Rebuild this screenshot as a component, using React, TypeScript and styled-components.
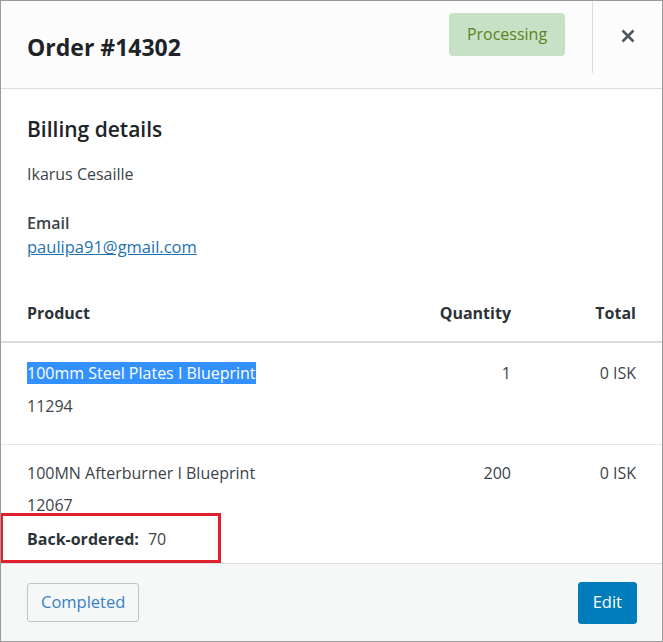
import React from "react";
import styled, { createGlobalStyle } from "styled-components";

const Global = createGlobalStyle`
  html, body { margin: 0; padding: 0; background: #ffffff; }
  body { font-family: "Open Sans", "Noto Sans", sans-serif; color: #3c434a; }
  * { box-sizing: border-box; }
`;

const Modal = styled.div`
  width: 663px;
  height: 642px;
  border: 1px solid #9a9a9a;
  display: flex;
  flex-direction: column;
  background: #fff;
  overflow: hidden;
`;

const Header = styled.header`
  height: 88px;
  flex: none;
  display: flex;
  align-items: flex-start;
  background: #fcfcfc;
  border-bottom: 1px solid #dcdcde;
  padding-left: 26px;
`;

const Title = styled.h1`
  margin: 0;
  margin-top: 32px;
  flex: 1;
  font-size: 23px;
  line-height: 28px;
  font-weight: 700;
  color: #1d2327;
`;

const Badge = styled.span`
  margin-top: 12px;
  margin-right: 27px;
  width: 116px;
  height: 43px;
  display: flex;
  align-items: center;
  justify-content: center;
  padding-bottom: 2px;
  border-radius: 4px;
  background: #c6e1c6;
  color: #5b841b;
  font-size: 16px;
`;

const CloseBtn = styled.button`
  width: 70px;
  height: 72px;
  border: none;
  border-left: 1px solid #dcdcde;
  background: transparent;
  display: flex;
  align-items: center;
  justify-content: center;
  padding: 0 0 2px 0;
  color: #50575e;
  cursor: pointer;
`;

const Body = styled.main`
  flex: 1;
  min-height: 0;
  overflow: hidden;
`;

const Section = styled.section`
  padding: 27px 26px 0;
`;

const SectionTitle = styled.h2`
  margin: 0;
  font-size: 21px;
  line-height: 26px;
  font-weight: 600;
  color: #1d2327;
`;

const Text = styled.p<{ $gap?: number }>`
  margin: ${(p) => p.$gap ?? 0}px 0 0;
  font-size: 16px;
  line-height: 22px;
  color: #3c434a;
`;

const Label = styled.div`
  margin-top: 26px;
  font-size: 16px;
  line-height: 24px;
  font-weight: 600;
  color: #3c434a;
`;

const Link = styled.a`
  display: block;
  font-size: 16.5px;
  line-height: 24px;
  color: #2271b1;
  text-decoration: underline;
`;

const TableHead = styled.div`
  margin-top: 43px;
  display: grid;
  grid-template-columns: 1fr 100px 125px;
  padding: 0 26px 17px;
  border-bottom: 2px solid #dcdcde;
`;

const Th = styled.div<{ $right?: boolean }>`
  font-size: 16px;
  line-height: 22px;
  font-weight: 700;
  color: #2c3338;
  text-align: ${(p) => (p.$right ? "right" : "left")};
`;

const Row = styled.div<{ $last?: boolean }>`
  display: grid;
  grid-template-columns: 1fr 100px 125px;
  padding: ${(p) => (p.$last ? "17px 26px 13px" : "19px 26px 27px")};
  border-bottom: ${(p) => (p.$last ? "none" : "1px solid #e8e8e8")};
`;

const Td = styled.div<{ $right?: boolean }>`
  font-size: 16px;
  line-height: 22px;
  color: #3c434a;
  text-align: ${(p) => (p.$right ? "right" : "left")};
`;

const Selected = styled.span`
  background: #3391ff;
  color: #ffffff;
`;

const Sku = styled.div<{ $gap: number }>`
  margin-top: ${(p) => p.$gap}px;
  font-size: 16px;
  line-height: 22px;
  color: #3c434a;
`;

const Meta = styled.div`
  position: relative;
  margin-top: 12px;
  font-size: 16px;
  line-height: 22px;
  color: #3c434a;
  display: flex;
  gap: 9px;
`;

const MetaKey = styled.strong`
  font-weight: 700;
  color: #2c3338;
`;

const Highlight = styled.span`
  position: absolute;
  left: -27px;
  top: -15px;
  width: 221px;
  height: 50px;
  border: 3px solid #e0202e;
  pointer-events: none;
`;

const Footer = styled.footer`
  height: 78px;
  flex: none;
  display: flex;
  align-items: center;
  justify-content: space-between;
  padding: 0 25px 0 26px;
  background: #f6f7f7;
  border-top: 1px solid #dcdcde;
`;

const SecondaryBtn = styled.button`
  height: 39px;
  padding: 0 13px 2px;
  border: 1px solid #c3c4c7;
  border-radius: 3px;
  background: #f6f7f7;
  color: #3582c4;
  font-family: inherit;
  font-size: 16.5px;
`;

const PrimaryBtn = styled.button`
  height: 42px;
  padding: 0 14px 2px;
  border: 1px solid #007cba;
  border-radius: 3px;
  background: #007cba;
  color: #ffffff;
  font-family: inherit;
  font-size: 16.5px;
`;

const items = [
  { name: "100mm Steel Plates I Blueprint", sku: "11294", qty: "1", total: "0 ISK", selected: true },
  { name: "100MN Afterburner I Blueprint", sku: "12067", qty: "200", total: "0 ISK", back: "70" },
];

export default function App() {
  return (
    <>
      <Global />
      <Modal>
        <Header>
          <Title>Order #14302</Title>
          <Badge>Processing</Badge>
          <CloseBtn aria-label="Close">
            <svg width="16" height="16" viewBox="0 0 16 16">
              <path d="M2.5 2.5 L13.5 13.5 M13.5 2.5 L2.5 13.5" stroke="currentColor" strokeWidth="2.6" strokeLinecap="butt" />
            </svg>
          </CloseBtn>
        </Header>
        <Body>
          <Section>
            <SectionTitle>Billing details</SectionTitle>
            <Text $gap={21}>Ikarus Cesaille</Text>
            <Label>Email</Label>
            <Link href="#">paulipa91@gmail.com</Link>
          </Section>
          <TableHead>
            <Th>Product</Th>
            <Th $right>Quantity</Th>
            <Th $right>Total</Th>
          </TableHead>
          {items.map((it, i) => (
            <Row key={it.sku} $last={i === items.length - 1}>
              <div>
                <Td>{it.selected ? <Selected>{it.name}</Selected> : it.name}</Td>
                <Sku $gap={it.selected ? 11 : 10}>{it.sku}</Sku>
                {it.back && (
                  <Meta>
                    <MetaKey>Back-ordered:</MetaKey>
                    <span>{it.back}</span>
                    <Highlight />
                  </Meta>
                )}
              </div>
              <Td $right>{it.qty}</Td>
              <Td $right>{it.total}</Td>
            </Row>
          ))}
        </Body>
        <Footer>
          <SecondaryBtn>Completed</SecondaryBtn>
          <PrimaryBtn>Edit</PrimaryBtn>
        </Footer>
      </Modal>
    </>
  );
}
